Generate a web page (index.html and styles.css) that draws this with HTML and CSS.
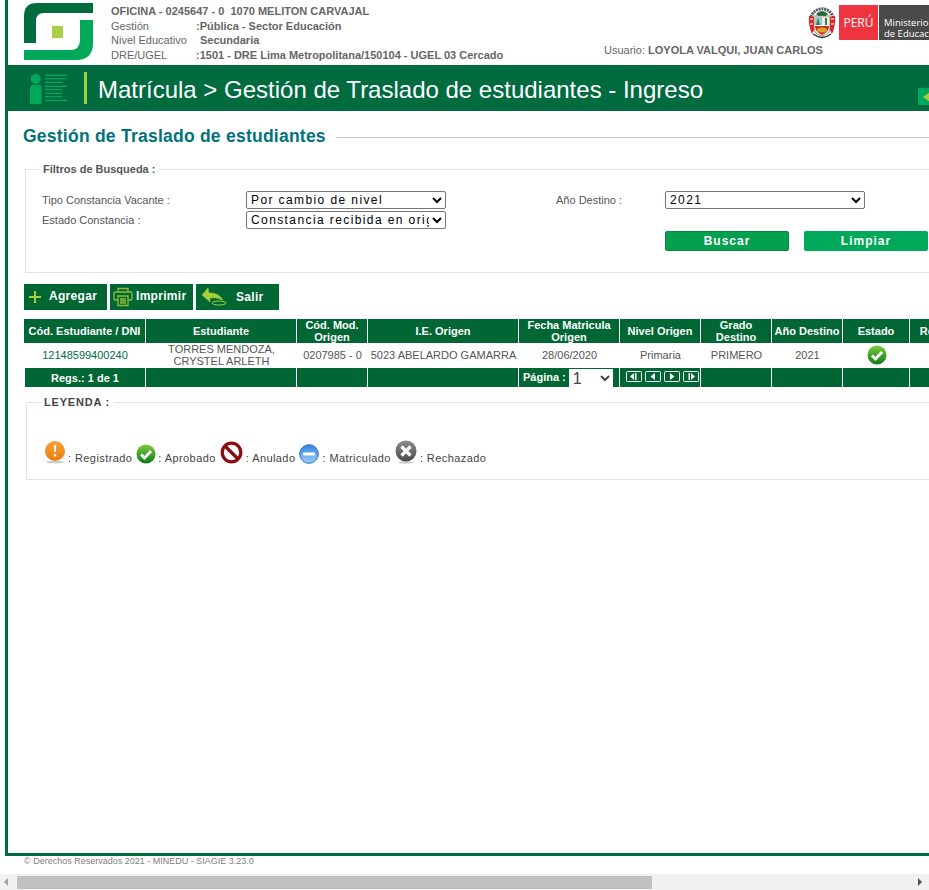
FILE: index.html
```html
<!DOCTYPE html>
<html lang="es">
<head>
  <meta charset="UTF-8" />
  <title>SIAGIE - Gestión de Traslado de estudiantes</title>
  <link rel="stylesheet" href="styles.css">
</head>
<body>
  <div class="frame">
    <header class="top">
      <svg class="logo" viewBox="0 0 69 57" width="69" height="57">
        <path d="M0 40V13Q0 0 13 0H69V10H20Q12 10 12 18V40Z" fill="#006b3f"/>
        <path d="M0 57V47H46Q56 47 56 37V17H69V40Q69 57 52 57Z" fill="#00a859"/>
        <rect x="28" y="23" width="11" height="12" fill="#a8d045"/>
      </svg>
      <div class="info">
        <div class="info-head">OFICINA - 0245647 - 0&nbsp; 1070 MELITON CARVAJAL</div>
        <div class="info-row"><span>Gestión</span><b>:Pública - Sector Educación</b></div>
        <div class="info-row"><span>Nivel Educativo</span><b class="nivel">Secundaria</b></div>
        <div class="info-row"><span>DRE/UGEL</span><b>:1501 - DRE Lima Metropolitana/150104 - UGEL 03 Cercado</b></div>
      </div>
      <div class="user">Usuario: <b>LOYOLA VALQUI, JUAN CARLOS</b></div>
      <svg class="crest" viewBox="0 0 28 34" width="28" height="34">
        <path d="M3 12A11.500 11.500 0 0 1 25 12" fill="none" stroke="#555" stroke-width="3" stroke-dasharray="2 .8"/>
        <path d="M8 9Q14 3 20 9L18 11H10Z" fill="#1f6b45"/>
        <path d="M1 11L6 12V25L4 29Q0 20 1 11ZM27 11L22 12V25L24 29Q28 20 27 11Z" fill="#d8262c"/>
        <path d="M2 14H5M2 19H5M23 14H26M23 19H26" stroke="#fff"/>
        <path d="M6 11H22V23Q22 29 14 31Q6 29 6 23Z" fill="#fff" stroke="#8a6a2a" stroke-width=".8"/>
        <rect x="7" y="12" width="7" height="8" fill="#9cc7d8"/>
        <rect x="14" y="12" width="7" height="8" fill="#e8efe0"/>
        <path d="M10 13l2 7H8ZM17 13h2v7h-2z" fill="#3d7a4f"/>
        <path d="M7 21H21Q21 27 14 30Q7 27 7 21Z" fill="#d8262c"/>
        <ellipse cx="14" cy="25" rx="5" ry="2.500" fill="#d9a520"/>
        <path d="M5 29Q14 36 23 29" fill="none" stroke="#333" stroke-width="1.500"/>
      </svg>
      <div class="peru">PERÚ</div>
      <div class="minedu">Ministerio<br>de Educación</div>
    </header>

    <div class="title-bar">
      <svg class="title-icon" viewBox="0 0 38 32" width="38" height="32">
        <circle cx="6.700" cy="7" r="5" fill="#00a859"/>
        <path d="M1 16Q1 13 4 13H9.500Q12.500 13 12.500 16V32H1Z" fill="#00a859"/>
        <path d="M16 3.300H38M16 6.700H38M16 10.300H33M16 14.300H38M16 17.700H33M16 21.300H33M16 24.700H33M16 28.300H38" stroke="#00a859" stroke-width="1.300"/>
      </svg>
      <h1>Matrícula &gt; Gestión de Traslado de estudiantes - Ingreso</h1>
      <div class="collapse"><i></i></div>
    </div>

    <main class="content">
      <div class="page-title">
        <h2>Gestión de Traslado de estudiantes</h2>
        <span class="rule"></span>
      </div>

      <fieldset class="filters">
        <legend>Filtros de Busqueda :</legend>
        <div class="filter-grid">
          <label for="tipo">Tipo Constancia Vacante :</label>
          <select id="tipo"><option>Por cambio de nivel</option></select>
          <span></span>
          <label for="anio">Año Destino :</label>
          <select id="anio"><option>2021</option></select>

          <label for="estado">Estado Constancia :</label>
          <select id="estado"><option>Constancia recibida en origen</option></select>
          <span></span><span></span><span></span>

          <span></span><span></span><span></span><span></span>
          <div class="filter-actions">
            <button class="btn btn-dark" type="button">Buscar</button>
            <button class="btn" type="button">Limpiar</button>
          </div>
        </div>
      </fieldset>

      <div class="toolbar">
        <button class="tool" type="button">
          <svg viewBox="0 0 14 14" width="14" height="14"><path d="M7 1V13M1 7H13" stroke="#a6ce39" stroke-width="2"/></svg>
          <span class="tool-add">Agregar</span>
        </button>
        <button class="tool tool-print" type="button">
          <svg viewBox="0 0 20 20" width="20" height="20" fill="none" stroke="#8dbb35" stroke-width="1.300">
            <path d="M5 5V1.500H15V5"/>
            <path d="M5 13H2Q1 13 1 12V6Q1 5 2 5H18Q19 5 19 6V12Q19 13 18 13H15"/>
            <path d="M5 9H15V18.500H5ZM7 12H13M7 14H13M7 16H13"/>
          </svg>
          <span>Imprimir</span>
        </button>
        <button class="tool tool-exit" type="button">
          <svg viewBox="0 0 28 22" width="28" height="22" fill="none" stroke="#a6ce39">
            <path d="M8 2L2 9L10 16V12Q16 11 23 14Q18 6 9 7Z" fill="#a6ce39" stroke-width=".5"/>
            <ellipse cx="19" cy="17" rx="7" ry="2" stroke-width="1"/>
          </svg>
          <span>Salir</span>
        </button>
      </div>

      <table class="grid">
        <colgroup>
          <col class="c1"><col class="c2"><col class="c3"><col class="c4"><col class="c5">
          <col class="c6"><col class="c7"><col class="c8"><col class="c9"><col class="c10">
        </colgroup>
        <thead>
          <tr>
            <th>Cód. Estudiante / DNI</th>
            <th>Estudiante</th>
            <th>Cód. Mod. Origen</th>
            <th>I.E. Origen</th>
            <th>Fecha Matricula Origen</th>
            <th>Nivel Origen</th>
            <th>Grado Destino</th>
            <th>Año Destino</th>
            <th>Estado</th>
            <th>Reporte</th>
          </tr>
        </thead>
        <tbody>
          <tr>
            <td><a href="#">12148599400240</a></td>
            <td>TORRES MENDOZA, CRYSTEL ARLETH</td>
            <td>0207985 - 0</td>
            <td>5023 ABELARDO GAMARRA</td>
            <td>28/06/2020</td>
            <td>Primaria</td>
            <td>PRIMERO</td>
            <td>2021</td>
            <td>
              <svg class="status" viewBox="0 0 20 20" width="20" height="20"><use href="#ico-ok"/></svg>
            </td>
            <td></td>
          </tr>
        </tbody>
        <tfoot>
          <tr>
            <td class="regs">Regs.: 1 de 1</td>
            <td></td><td></td><td></td>
            <td class="pager-label">Página : <select class="page-select"><option>1</option></select></td>
            <td class="pager-cell">
              <div class="pager">
                <svg viewBox="0 0 16 11" width="16" height="11"><rect x=".5" y=".5" width="15" height="10" rx="1"/><path class="on" d="M8 2L4 5.500L8 9ZM9 2h1.500v7H9Z"/></svg>
                <svg viewBox="0 0 16 11" width="16" height="11"><rect x=".5" y=".5" width="15" height="10" rx="1"/><path class="on" d="M10 2L5.500 5.500L10 9Z"/></svg>
                <svg viewBox="0 0 16 11" width="16" height="11"><rect x=".5" y=".5" width="15" height="10" rx="1"/><path class="on" d="M6 2L10.500 5.500L6 9Z"/></svg>
                <svg viewBox="0 0 16 11" width="16" height="11"><rect x=".5" y=".5" width="15" height="10" rx="1"/><path class="on" d="M8 2L12 5.500L8 9ZM5.500 2H7v7H5.500Z"/></svg>
              </div>
            </td>
            <td></td><td></td><td></td><td></td>
          </tr>
        </tfoot>
      </table>

      <fieldset class="legend-box">
        <legend>LEYENDA :</legend>
        <div class="legend-row">
          <div class="legend-item tight">
            <svg viewBox="0 0 22 24" width="22" height="24"><ellipse cx="11" cy="22" rx="9" ry="1.500" fill="#ccc"/><circle cx="11" cy="11" r="10" fill="url(#g-orange)"/><path d="M9.800 5H12.200L11.800 12H10.200ZM9.800 14H12.200V16.500H9.800Z" fill="#fff"/></svg>
            <span>: Registrado</span>
          </div>
          <div class="legend-item tight">
            <svg viewBox="0 0 20 20" width="20" height="20"><use href="#ico-ok"/></svg>
            <span>: Aprobado</span>
          </div>
          <div class="legend-item">
            <svg viewBox="0 0 23 23" width="23" height="23"><circle cx="11.500" cy="11.500" r="9.300" fill="#fff" stroke="#8e0b12" stroke-width="3.200"/><path d="M5 5L18 18" stroke="#8e0b12" stroke-width="3.400"/></svg>
            <span>: Anulado</span>
          </div>
          <div class="legend-item">
            <svg viewBox="0 0 20 20" width="20" height="20"><circle cx="10" cy="10" r="9.300" fill="url(#g-blue)" stroke="#2a6fc4"/><rect x="4" y="8.500" width="12" height="3" rx="1" fill="#fff"/></svg>
            <span>: Matriculado</span>
          </div>
          <div class="legend-item">
            <svg viewBox="0 0 22 24" width="22" height="24"><ellipse cx="11" cy="22.500" rx="8" ry="1.200" fill="#ccc"/><circle cx="11" cy="11" r="10.500" fill="url(#g-grey)"/><path d="M6.500 6.500L15.500 15.500M15.500 6.500L6.500 15.500" stroke="#fff" stroke-width="3.200"/></svg>
            <span>: Rechazado</span>
          </div>
        </div>
      </fieldset>
    </main>
  </div>

  <footer class="copy">© Derechos Reservados 2021 - MINEDU - SIAGIE 3.23.0</footer>

  <div class="scrollbar">
    <i class="arrow-left"></i>
    <div class="thumb"></div>
    <i class="arrow-right"></i>
  </div>

  <!-- shared icon defs -->
  <svg class="defs" width="0" height="0">
    <defs>
      <linearGradient id="g-green" x1="0" y1="0" x2="0" y2="1"><stop offset="0" stop-color="#7ecb3a"/><stop offset="1" stop-color="#0c7a1c"/></linearGradient>
      <linearGradient id="g-orange" x1="0" y1="0" x2="0" y2="1"><stop offset="0" stop-color="#f9a03a"/><stop offset="1" stop-color="#ea7c10"/></linearGradient>
      <linearGradient id="g-blue" x1="0" y1="0" x2="0" y2="1"><stop offset="0" stop-color="#2f7fe0"/><stop offset="1" stop-color="#9fd0f7"/></linearGradient>
      <linearGradient id="g-grey" x1="0" y1="0" x2="0" y2="1"><stop offset="0" stop-color="#8c8c8c"/><stop offset="1" stop-color="#4a4a4a"/></linearGradient>
      <g id="ico-ok"><circle cx="10" cy="10" r="9.500" fill="url(#g-green)"/><path d="M5 10.500L8.500 14L15 7" fill="none" stroke="#fff" stroke-width="2.800"/></g>
    </defs>
  </svg>
</body>
</html>
```

FILE: styles.css
```css
html, body {
  margin: 0;
  padding: 0;
  height: 890px;
  overflow: hidden;
  background: #fff;
}
body {
  font-family: "Liberation Sans", Arial, sans-serif;
  font-size: 11px;
  color: #555;
}
.frame {
  width: 1300px;
  height: 853px;
  margin-left: 5px;
  border-left: 3px solid #006b3f;
  border-bottom: 3px solid #006b3f;
}

/* header */
.top {
  display: flex;
  height: 65px;
  padding-left: 16px;
  box-sizing: border-box;
}
.logo {
  margin-top: 3px;
  flex: none;
}
.info {
  width: 493px;
  margin-left: 18px;
  padding-top: 4px;
  line-height: 14.5px;
  color: #666;
  flex: none;
}
.info-head {
  font-weight: bold;
}
.info-row {
  display: grid;
  grid-template-columns: 85px auto;
}
.nivel {
  padding-left: 4px;
}
.user {
  width: 204px;
  padding-top: 43px;
  line-height: 14px;
  color: #666;
  white-space: nowrap;
  flex: none;
}
.crest {
  margin-top: 5px;
  margin-right: 3px;
  flex: none;
}
.peru {
  width: 39px;
  height: 35px;
  margin-top: 5px;
  background: #ef333f;
  color: #fff;
  font-family: "Open Sans", sans-serif;
  font-size: 12px;
  line-height: 35px;
  text-align: center;
  flex: none;
}
.minedu {
  width: 100px;
  height: 35px;
  margin-top: 5px;
  margin-left: 1px;
  padding: 12px 0 0 5px;
  box-sizing: border-box;
  background: #4a4a4a;
  color: #fff;
  font-family: "Open Sans", sans-serif;
  font-size: 9.500px;
  line-height: 11px;
  white-space: nowrap;
  flex: none;
}

/* green bar */
.title-bar {
  display: flex;
  align-items: center;
  position: relative;
  height: 46px;
  padding-left: 21px;
  background: #006b3f;
}
.title-icon {
  flex: none;
}
.title-bar h1 {
  margin: 0 0 0 17px;
  padding-left: 11px;
  border-left: 3px solid #a6ce39;
  height: 32px;
  color: #fff;
  font-size: 24px;
  font-weight: normal;
  line-height: 36px;
}
.collapse {
  position: absolute;
  left: 910px;
  top: 23px;
  width: 30px;
  height: 17px;
  background: #00a859;
}
.collapse i {
  display: block;
  width: 0;
  margin: 4px 0 0 5px;
  border: 5px solid transparent;
  border-left-width: 0;
  border-right: 7px solid #a6ce39;
}

/* content */
.content {
  padding: 14px 0 0 15px;
}
.page-title {
  display: flex;
  align-items: center;
  gap: 10px;
  height: 22px;
}
.page-title h2 {
  margin: 0;
  color: #00727a;
  font-size: 17.500px;
  letter-spacing: .24px;
  white-space: nowrap;
}
.rule {
  flex: 1;
  height: 1px;
  margin-top: 3px;
  background: #ccc;
}
fieldset {
  margin: 0;
  border: 1px solid #e3e3e3;
}
legend {
  font-weight: bold;
  line-height: 14px;
}
.filters {
  margin: 15px 0 0 2px;
  padding: 15px 0 21px 16px;
}
.filters legend {
  margin-left: -3px;
  padding: 0 4px;
  color: #555;
}
.filter-grid {
  display: grid;
  grid-template-columns: 204px 200px 110px 109px 200px;
  grid-auto-rows: 20px;
  align-items: start;
}
.filter-grid label {
  line-height: 18px;
  color: #555;
}
.filter-grid select {
  width: 200px;
  height: 18px;
  padding: 0;
  border: 1px solid #767676;
  border-radius: 2px;
  background: #fff;
  color: #000;
  font-family: "Liberation Sans", Arial, sans-serif;
  font-size: 12px;
  letter-spacing: 1.400px;
}
.filter-actions {
  display: flex;
  gap: 15px;
}
.btn {
  flex: none;
  width: 124px;
  height: 20px;
  padding: 0;
  border: 0;
  border-radius: 2px;
  background: #00a859;
  color: #fff;
  font-family: "Liberation Sans", Arial, sans-serif;
  font-size: 12px;
  font-weight: bold;
  letter-spacing: 1px;
}
.btn-dark {
  border: 1px solid #068a3d;
  background: #03a04f;
}

/* toolbar */
.toolbar {
  display: flex;
  gap: 3px;
  margin: 11px 0 0 1px;
}
.tool {
  display: flex;
  align-items: center;
  width: 83px;
  height: 26px;
  padding: 0 0 0 4px;
  border: 0;
  background: #006633;
  color: #fff;
  font-family: "Liberation Sans", Arial, sans-serif;
  font-size: 12px;
  font-weight: bold;
  letter-spacing: .3px;
}
.tool span {
  margin-left: 3px;
  margin-bottom: 2px;
}
.tool .tool-add {
  margin-left: 7px;
}
.tool-print {
  padding-left: 3px;
}
.tool-exit span {
  margin: 0 0 0 8px;
}

/* table */
.grid {
  margin: 9px 0 0 1px;
  border-collapse: separate;
  border-spacing: 0;
  table-layout: fixed;
  width: 948px;
}
.c1 { width: 122px; }
.c2 { width: 151px; }
.c3 { width: 71px; }
.c4 { width: 151px; }
.c5 { width: 101px; }
.c6 { width: 81px; }
.c7 { width: 71px; }
.c8 { width: 71px; }
.c9 { width: 67px; }
.c10 { width: 62px; }
.grid th {
  height: 24px;
  padding: 0;
  background: #006633;
  border-right: 1px solid #fff;
  color: #fff;
  font-size: 11px;
  line-height: 12px;
}
.grid tbody td {
  height: 24px;
  padding: 0;
  color: #555;
  line-height: 12px;
  text-align: center;
}
.grid a {
  color: #006b3f;
  text-decoration: none;
}
.status {
  display: block;
  margin: 0 auto;
}
.grid tfoot td {
  height: 19px;
  padding: 0;
  background: #006633;
  border-right: 1px solid #fff;
  border-top: 1px solid #fff;
  color: #fff;
  font-weight: bold;
  text-align: center;
}
.grid tfoot .regs {
  border-left: 1px solid #fff;
}
.grid tfoot .pager-label {
  text-align: left;
  padding-left: 4px;
}
.page-select {
  width: 44px;
  height: 18px;
  padding: 0;
  border: 0;
  background: #fff;
  color: #444;
  font-family: "Liberation Sans", Arial, sans-serif;
  font-size: 16px;
  vertical-align: middle;
}
.pager {
  display: flex;
  gap: 3px;
  padding-left: 6px;
  margin-top: -2px;
}
.pager svg {
  fill: none;
  stroke: #fff;
  stroke-width: 1;
  flex: none;
}
.pager .on {
  fill: #fff;
  stroke: none;
}

/* leyenda */
.legend-box {
  margin: 8px 0 0 3px;
  padding: 0 0 12px 17px;
  height: 85px;
  box-sizing: border-box;
}
.legend-box legend {
  margin-left: -2px;
  padding: 0 4px 0 2px;
  color: #444;
  letter-spacing: .8px;
}
.legend-row {
  display: flex;
  align-items: flex-end;
  gap: 4px;
  padding-top: 31px;
}
.legend-item {
  display: flex;
  align-items: flex-end;
  gap: 3px;
}
.legend-item.tight {
  gap: 2px;
}
.legend-item span {
  line-height: 11px;
  letter-spacing: .42px;
  color: #444;
}

/* footer + fake scrollbar, the page runs wider than the window */
.copy {
  height: 18px;
  padding-left: 24px;
  color: #808080;
  font-size: 9px;
  line-height: 11px;
}
.scrollbar {
  display: flex;
  align-items: center;
  width: 929px;
  height: 16px;
  background: #f1f1f1;
}
.thumb {
  width: 635px;
  height: 13px;
  margin-left: 9px;
  background: #c1c1c1;
}
.arrow-left {
  width: 0;
  margin-left: 4px;
  border: 4px solid transparent;
  border-left-width: 0;
  border-right: 4px solid #a3a3a3;
}
.arrow-right {
  width: 0;
  margin-left: 266px;
  border: 4px solid transparent;
  border-right-width: 0;
  border-left: 4px solid #505050;
}
.defs {
  position: absolute;
}
```
